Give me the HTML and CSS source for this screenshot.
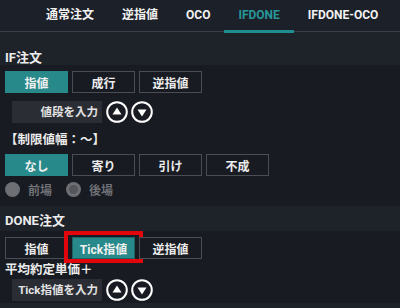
FILE: index.html
```html
<!DOCTYPE html>
<html lang="ja">
<head>
    <meta charset="UTF-8">
    <meta name="viewport" content="width=device-width, initial-scale=1.0">
    <title>IFDONE</title>
    <link rel="stylesheet" href="styles.css">
</head>
<body>

<nav class="tabs">
    <a class="tab">通常注文</a>
    <a class="tab">逆指値</a>
    <a class="tab">OCO</a>
    <a class="tab active">IFDONE</a>
    <a class="tab">IFDONE-OCO</a>
</nav>

<div class="sec-head first">IF注文</div>
<div class="sec-body">
    <div class="seg">
        <button class="seg-btn on">指値</button>
        <button class="seg-btn">成行</button>
        <button class="seg-btn">逆指値</button>
    </div>
    <div class="price-row">
        <div class="price-input">値段を入力</div>
        <button class="step">
            <svg width="22" height="22" viewBox="0 0 22 22"><circle cx="11" cy="11" r="9.8" fill="none" stroke="#fff" stroke-width="2"/><path d="M11 6.5 L15.5 13.5 H6.5 Z" fill="#fff"/></svg>
        </button>
        <button class="step">
            <svg width="22" height="22" viewBox="0 0 22 22"><circle cx="11" cy="11" r="9.8" fill="none" stroke="#fff" stroke-width="2"/><path d="M11 15.5 L15.5 8.5 H6.5 Z" fill="#fff"/></svg>
        </button>
    </div>
    <div class="label">【制限値幅：～】</div>
    <div class="seg">
        <button class="seg-btn on">なし</button>
        <button class="seg-btn">寄り</button>
        <button class="seg-btn">引け</button>
        <button class="seg-btn">不成</button>
    </div>
    <div class="radios">
        <label class="radio"><span class="dot"></span>前場</label>
        <label class="radio"><span class="dot checked"></span>後場</label>
    </div>
</div>

<div class="sec-head">DONE注文</div>
<div class="sec-body">
    <div class="seg">
        <button class="seg-btn">指値</button>
        <button class="seg-btn on marked">Tick指値</button>
        <button class="seg-btn">逆指値</button>
    </div>
    <div class="label small">平均約定単価＋</div>
    <div class="price-row tight">
        <div class="price-input">Tick指値を入力</div>
        <button class="step">
            <svg width="22" height="22" viewBox="0 0 22 22"><circle cx="11" cy="11" r="9.8" fill="none" stroke="#fff" stroke-width="2"/><path d="M11 6.5 L15.5 13.5 H6.5 Z" fill="#fff"/></svg>
        </button>
        <button class="step">
            <svg width="22" height="22" viewBox="0 0 22 22"><circle cx="11" cy="11" r="9.8" fill="none" stroke="#fff" stroke-width="2"/><path d="M11 15.5 L15.5 8.5 H6.5 Z" fill="#fff"/></svg>
        </button>
    </div>
</div>
<div class="sec-head tail"></div>

</body>
</html>
```

FILE: styles.css
```css
* {
    margin: 0;
    padding: 0;
    box-sizing: border-box;
}
body {
    font-family: Roboto, "Noto Sans CJK JP", sans-serif;
    background-color: #181b22;
    color: #ececec;
    font-weight: 700;
    font-size: 12px;
    width: 400px;
    overflow: hidden;
}
.tabs {
    display: flex;
    height: 32px;
    padding-left: 32px;
    background-color: #1c2028;
    border-bottom: 1px solid #3a3e45;
    white-space: nowrap;
}
.tab {
    flex-shrink: 0;
    padding: 0 14px;
    line-height: 30px;
    font-size: 12px;
    color: #f2f2f2;
    border-bottom: 3px solid transparent;
    margin-bottom: -2px;
}
.tab.active {
    color: #27979a;
    border-bottom-color: #1f8e90;
}
.sec-head {
    background-color: #1e232a;
    height: 25px;
    padding: 0 5px 3px;
    display: flex;
    align-items: flex-end;
    font-size: 13px;
    line-height: 15px;
}
.sec-head.first {
    height: 33px;
    padding-bottom: 0;
}
.sec-head.tail {
    height: 10px;
    margin-top: 2px;
}
.sec-body {
    padding: 6px 5px 0;
}
.seg {
    display: flex;
    gap: 4px;
}
.seg-btn {
    width: 63px;
    height: 22px;
    font-family: inherit;
    font-weight: 700;
    font-size: 12px;
    color: #ececec;
    background-color: #181b22;
    border: 1px solid #4a4d54;
    position: relative;
}
.seg-btn.on {
    background-color: #27898a;
    border-color: #27898a;
    color: #f0f0f0;
}
.seg-btn.marked {
    border-color: #1d6364;
}
.seg-btn.marked::after {
    content: "";
    position: absolute;
    top: -7px;
    bottom: -5px;
    left: -9px;
    right: -9px;
    border: 4px solid #e3050c;
}
.price-row {
    display: flex;
    align-items: center;
    gap: 3px;
    margin: 8px 0 0 7px;
}
.price-row.tight {
    margin-top: 3px;
}
.price-input {
    width: 90px;
    height: 22px;
    background-color: #2a2d34;
    text-align: right;
    padding-right: 4px;
    line-height: 22px;
    font-size: 11.5px;
    color: #e2e2e2;
    margin-right: 1px;
}
.step {
    width: 22px;
    height: 22px;
    background: none;
    border: none;
    display: flex;
}
.label {
    margin-top: 6px;
    height: 25px;
    font-size: 12.5px;
}
.label.small {
    margin-top: 4px;
    height: 13px;
    line-height: 13px;
}
.radios {
    display: flex;
    gap: 14px;
    margin: 5px 0 9px;
    height: 16px;
    align-items: center;
}
.radio {
    display: flex;
    align-items: center;
    gap: 8px;
    color: #6f7176;
    font-size: 12px;
}
.dot {
    width: 15px;
    height: 15px;
    border-radius: 50%;
    background-color: #6e6f74;
    display: flex;
    align-items: center;
    justify-content: center;
}
.dot.checked::after {
    content: "";
    width: 9px;
    height: 9px;
    border-radius: 50%;
    background-color: #55565b;
}
```
